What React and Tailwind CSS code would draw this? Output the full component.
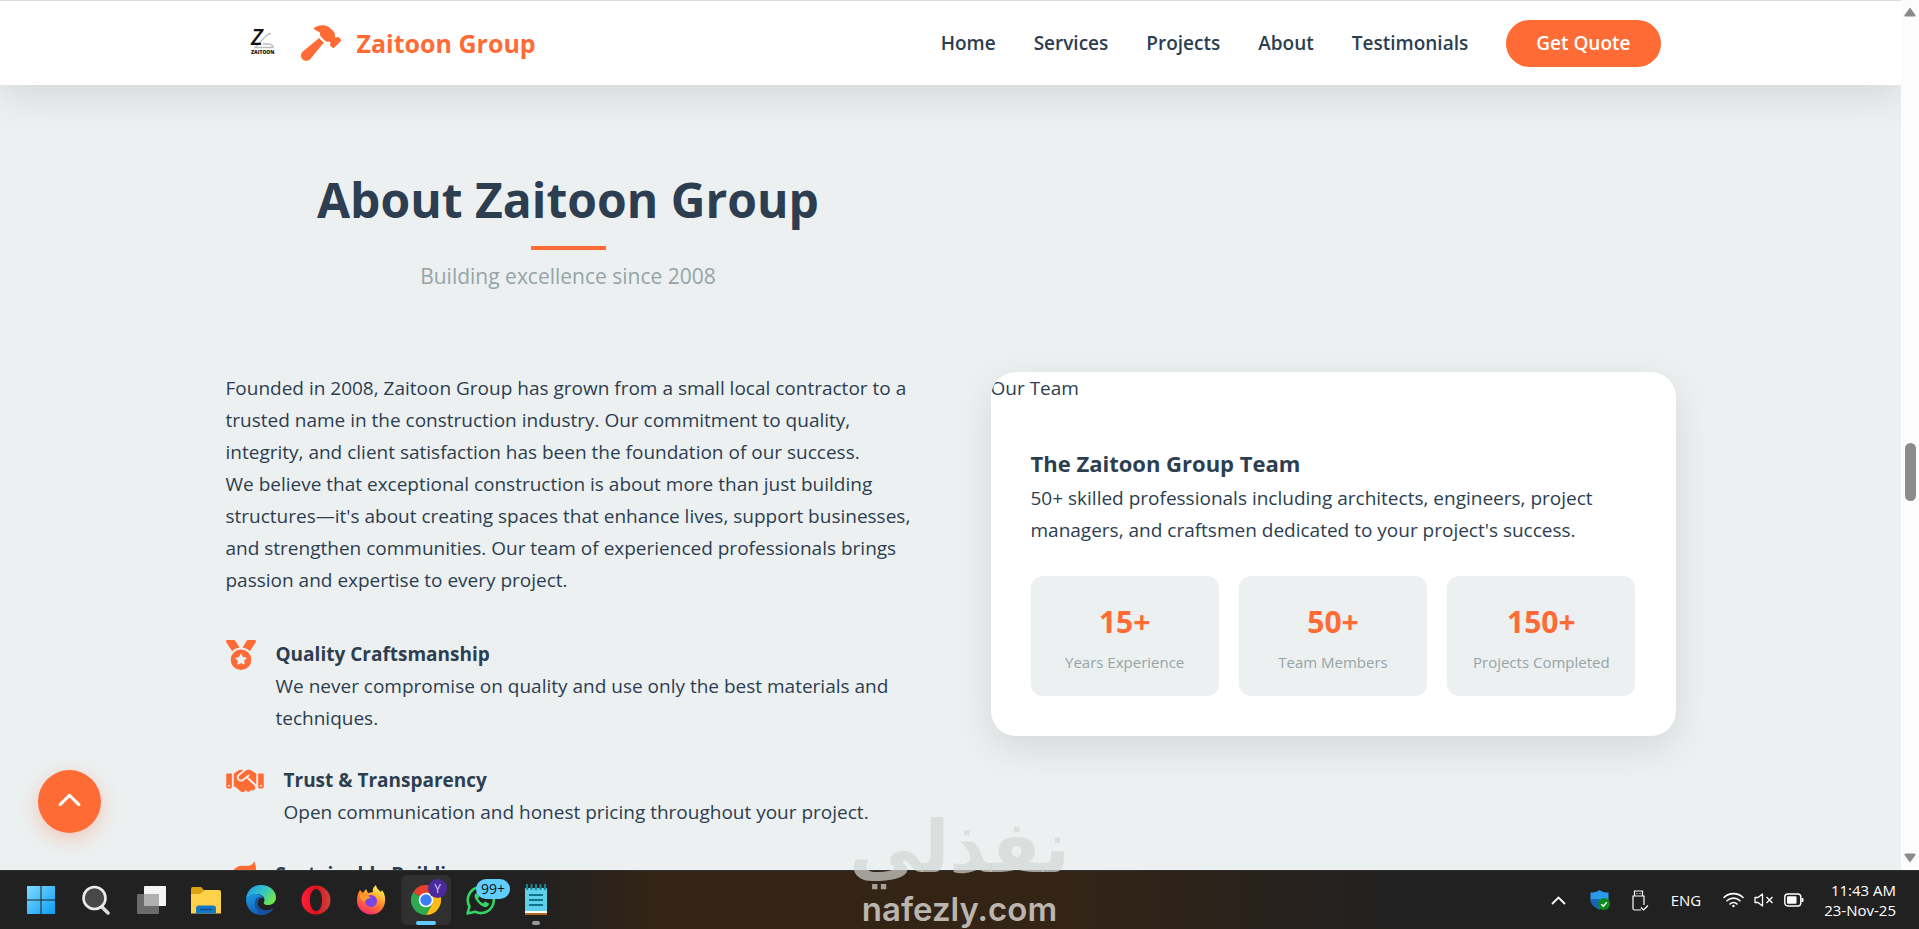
import React from "react";
import {
  FaChevronUp,
  FaHammer,
  FaHandshake,
  FaLeaf,
  FaMedal,
} from "react-icons/fa6";

const navLinks = ["Home", "Services", "Projects", "About", "Testimonials"];

const features = [
  {
    icon: FaMedal,
    iconSize: "h-[30px] w-[30px]",
    title: "Quality Craftsmanship",
    text: "We never compromise on quality and use only the best materials and techniques.",
  },
  {
    icon: FaHandshake,
    iconSize: "h-[30px] w-[38px]",
    title: "Trust & Transparency",
    text: "Open communication and honest pricing throughout your project.",
  },
  {
    icon: FaLeaf,
    iconSize: "h-[30px] w-[30px]",
    title: "Sustainable Building",
  },
];

const stats = [
  { value: "15+", label: "Years Experience" },
  { value: "50+", label: "Team Members" },
  { value: "150+", label: "Projects Completed" },
];

const ZaitoonLogo = () => (
  <svg width="62" height="62" viewBox="0 0 62 62" aria-label="Zaitoon logo">
    <path d="M32 21.500 C29 21.500 28 23 26 25 L16 35.500 H34 V34 L30.500 32 H24" fill="none" stroke="#bdbdbd" strokeWidth="1.300" />
    <text x="12" y="33" fontFamily="Open Sans, sans-serif" fontSize="22" fontStyle="italic" fontWeight="600" fill="#111">
      Z
    </text>
    <text x="12" y="42" fontFamily="Open Sans, sans-serif" fontSize="5" fontWeight="800" fill="#111">
      ZAITOON
    </text>
  </svg>
);

const Header = () => (
  <header className="relative z-10 border-t border-[#dcdcdc] bg-white shadow-[0_12px_38px_rgba(0,0,0,0.1)]">
    <div className="mx-auto flex h-[84px] max-w-[1500px] items-center justify-between pr-10 pl-[38px]">
      <a href="#home" className="flex items-center text-[25px] font-bold text-[#ff6b35]">
        <ZaitoonLogo />
        <FaHammer className="mr-4 size-[40px]" />
        Zaitoon Group
      </a>
      <nav className="flex items-center gap-[38px] text-[19px] font-semibold">
        {navLinks.map((link) => (
          <a key={link} href={`#${link.toLowerCase()}`}>
            {link}
          </a>
        ))}
        <button className="h-[47px] rounded-full bg-[#ff6b35] px-[30px] text-white">Get Quote</button>
      </nav>
    </div>
  </header>
);

const TeamCard = () => (
  <div className="self-start overflow-hidden rounded-[25px] bg-white shadow-[0_12px_38px_rgba(0,0,0,0.1)]">
    <p>Our Team</p>
    <div className="p-10">
      <h3 className="text-[22px] leading-[38px] font-bold">The Zaitoon Group Team</h3>
      <p>
        50+ skilled professionals including architects, engineers, project managers, and craftsmen
        dedicated to your project's success.
      </p>
      <div className="mt-[30px] grid grid-cols-3 gap-5">
        {stats.map((stat) => (
          <div key={stat.label} className="rounded-xl bg-[#ecf0f1] py-5 text-center">
            <div className="text-[30px] leading-[52px] font-bold text-[#ff6b35]">{stat.value}</div>
            <div className="text-[15px] leading-7 text-[#95a5a6]">{stat.label}</div>
          </div>
        ))}
      </div>
    </div>
  </div>
);

const AboutSection = () => (
  <section id="about" className="mx-auto grid max-w-[1500px] grid-cols-2 gap-x-20 px-[25px] pt-[75px]">
    <div className="flex flex-col items-center pb-[78px]">
      <h2 className="text-[48px] leading-[80px] font-bold">About Zaitoon Group</h2>
      <div className="mt-[6px] h-1 w-[75px] bg-[#ff6b35]" />
      <p className="mt-2 text-[21px] leading-9 text-[#95a5a6]">Building excellence since 2008</p>
    </div>
    <div />
    <div>
      <p>
        Founded in 2008, Zaitoon Group has grown from a small local contractor to a trusted name in
        the construction industry. Our commitment to quality, integrity, and client satisfaction has
        been the foundation of our success.
      </p>
      <p>
        We believe that exceptional construction is about more than just building structures—it's
        about creating spaces that enhance lives, support businesses, and strengthen communities. Our
        team of experienced professionals brings passion and expertise to every project.
      </p>
      <ul className="mt-[42px] space-y-[30px]">
        {features.map(({ icon: Icon, iconSize, title, text }) => (
          <li key={title} className="flex items-start gap-5">
            <span className="mt-[2px] shrink-0 text-[#ff6b35]">
              <Icon className={iconSize} />
            </span>
            <div>
              <h4 className="font-bold">{title}</h4>
              {text && <p>{text}</p>}
            </div>
          </li>
        ))}
      </ul>
    </div>
    <TeamCard />
  </section>
);

const Scrollbar = () => (
  <div className="flex w-[18px] shrink-0 flex-col items-center bg-[#fcfcfc] py-[7px]">
    <svg width="12" height="10" viewBox="0 0 12 10">
      <path d="M6 0.5 L11.5 8 Q12 9.5 10.500 9.500 H1.500 Q0 9.500 0.500 8 Z" fill="#8b8b8b" />
    </svg>
    <div className="mt-[426px] h-[58px] w-[11px] rounded-full bg-[#8b8b8b]" />
    <svg className="mt-auto" width="12" height="10" viewBox="0 0 12 10">
      <path d="M6 9.5 L11.5 2 Q12 0.5 10.500 0.500 H1.500 Q0 0.500 0.500 2 Z" fill="#8b8b8b" />
    </svg>
  </div>
);

const WindowsIcon = () => (
  <svg width="30" height="30" viewBox="0 0 30 30">
    <defs>
      <linearGradient id="win" x1="0" y1="0" x2="1" y2="1">
        <stop offset="0" stopColor="#7fdcff" />
        <stop offset="1" stopColor="#0a9cf5" />
      </linearGradient>
    </defs>
    <path d="M1 1h13.500v13.500H1z M15.500 1H29v13.500H15.500z M1 15.500h13.500V29H1z M15.500 15.500H29V29H15.500z" fill="url(#win)" />
  </svg>
);

const SearchIcon = () => (
  <svg width="30" height="30" viewBox="0 0 30 30">
    <path d="M20 21l7 7" stroke="#dcdcdc" strokeWidth="3.500" strokeLinecap="round" />
    <circle cx="13.500" cy="13" r="11" fill="#484848" stroke="#ececec" strokeWidth="2.600" />
  </svg>
);

const TaskViewIcon = () => (
  <svg width="30" height="30" viewBox="0 0 30 30">
    <rect x="8" y="1" width="22" height="20" rx="1" fill="#f4f4f4" />
    <rect x="1" y="9" width="22" height="20" rx="1" fill="#6b6b6b" />
    <path d="M8 9h15v12H8z" fill="#b0b0b0" />
  </svg>
);

const ExplorerIcon = () => (
  <svg width="30" height="30" viewBox="0 0 30 30">
    <path d="M0 4q0-2 2-2h8l4 4v6H0z" fill="#dba313" />
    <path d="M0 9h9l5-4h14q2 0 2 2v21.500H0z" fill="#ffd04a" />
    <path d="M5 28.500v-5q0-3 3-3h14q3 0 3 3v5z" fill="#1478c4" />
    <path d="M9 24.500h12" stroke="#0b4f8c" strokeWidth="1.500" />
  </svg>
);

const EdgeIcon = () => (
  <svg width="30" height="30" viewBox="0 0 30 30">
    <defs>
      <linearGradient id="edgeTop" x1="0" y1="0" x2="1" y2="0.500">
        <stop offset="0.100" stopColor="#1e9de8" />
        <stop offset="0.600" stopColor="#36c5c5" />
        <stop offset="1" stopColor="#6be353" />
      </linearGradient>
      <linearGradient id="edgeBody" x1="0" y1="0" x2="0.600" y2="1">
        <stop offset="0" stopColor="#1b9be8" />
        <stop offset="1" stopColor="#1257ae" />
      </linearGradient>
    </defs>
    <path d="M0 14C1 5 7 0 15 0c9 0 15 6 15 12.500 0 4.500-3.500 7.500-7.500 7.500-4 0-5.500-1.500-4.500-3 2-4-2-8-7-8C5 9 1 12 0 14z" fill="url(#edgeTop)" />
    <path d="M0 14C2 10 6 8.500 10.500 9c4 .3 6.500 2.500 7 4.500-3-1.500-6 1-6 4.500 0 4.500 4 7.500 9 7.500 3 0 5-1 6.800-2C25 27.500 20 30 15 30 6 30 0 23 0 14z" fill="url(#edgeBody)" />
    <path d="M17 12c-6-1.500-9 3-8 8 1 6 6 10 9 9.700 4.500-.7 8-3.500 9.300-6.200C20 28 10 24 11.500 17c.5-2.500 3-4.500 5.500-5z" fill="#17509b" />
  </svg>
);

const OperaIcon = () => (
  <svg width="30" height="30" viewBox="0 0 30 30">
    <defs>
      <linearGradient id="opera" x1="0" y1="0" x2="1" y2="0">
        <stop offset="0" stopColor="#ff2035" />
        <stop offset="0.500" stopColor="#e0101f" />
        <stop offset="1" stopColor="#c8453f" />
      </linearGradient>
    </defs>
    <path fillRule="evenodd" d="M15 0.500a14.500 14.500 0 1 0 0 29 14.500 14.500 0 1 0 0-29z M15 4c4 0 6 5 6 11s-2 11-6 11-6-5-6-11 2-11 6-11z" fill="url(#opera)" />
  </svg>
);

const FirefoxIcon = () => (
  <svg width="30" height="30" viewBox="0 0 30 30">
    <defs>
      <linearGradient id="fox" x1="0.800" y1="0" x2="0.300" y2="1">
        <stop offset="0.100" stopColor="#fff04f" />
        <stop offset="0.500" stopColor="#ff8a26" />
        <stop offset="1" stopColor="#f5276c" />
      </linearGradient>
    </defs>
    <path d="M4 5l3 3 3-4 2 4 5-1c-1-3 1-5 3-7 0 3 3 5 5 7l1-2c3 4 3.500 8 3 12-1 8-7 12.500-14 12.500S1 24 1 16c0-5 1-8 3-11z" fill="url(#fox)" />
    <circle cx="15" cy="16" r="6" fill="#7a45e0" />
    <path d="M4 10c5 0 8 0 11 3-3 0-5 1-6 4-3-1-5-3-5-7z" fill="#ff9a2c" />
  </svg>
);

const ChromeIcon = () => (
  <svg width="30" height="30" viewBox="0 0 30 30">
    <path d="M15 15 2 7.500A15 15 0 0 1 28 7.500H15z" fill="#e8402f" />
    <path d="M15 15l6.500 3.700L15 30A15 15 0 0 1 2 7.500z" fill="#2da94f" />
    <path d="M15 7.500h13A15 15 0 0 1 15 30l6.500-11.300z" fill="#fdbd16" />
    <circle cx="15" cy="15" r="7.300" fill="#fff" />
    <circle cx="15" cy="15" r="5.700" fill="#3a7ff2" />
  </svg>
);

const WhatsappIcon = () => (
  <svg width="30" height="30" viewBox="0 0 30 30">
    <path d="M1.500 28.500l2-7A13 13 0 1 1 9 26.700z" fill="#212121" stroke="#35d366" strokeWidth="2.600" strokeLinejoin="round" />
    <path d="M11 8c-3 1-3 4-1 7s5 6 8.500 7c2.500.6 4.500-1 4.500-3.500L19 16.500l-2 2c-2-1-4-3-5-5l1.500-2z" fill="#35d366" />
  </svg>
);

const NotepadIcon = () => (
  <svg width="24" height="32" viewBox="0 0 24 32">
    <path d="M1 4h22v24H1z" fill="#5fd0ea" />
    <path d="M1 27h22v2H1z" fill="#fff" />
    <path d="M1 29h22v2H1z" fill="#b8661e" />
    <path d="M3 1v4M7.500 1v4M12 1v4M16.500 1v4M21 1v4" stroke="#1d7f95" strokeWidth="2.200" strokeLinecap="round" />
    <path d="M5 11h14M5 16h14M5 21h14" stroke="#14748b" strokeWidth="1.800" />
  </svg>
);

const ShieldIcon = () => (
  <svg width="20" height="20" viewBox="0 0 20 20">
    <path d="M9.500 0C12 2 15 2.500 18.500 2.500V9c0 5-4 8-9 10.500C4.500 17 .5 14 .5 9V2.500C4 2.500 7 2 9.500 0z" fill="#2a9bea" />
    <path d="M.5 9h9v10.500C4.500 17 .5 14 .5 9z" fill="#1565b8" />
    <circle cx="14" cy="14" r="6" fill="#0f8a1f" />
    <path d="M11.300 14.200l2 2 3.500-4" fill="none" stroke="#fff" strokeWidth="1.300" />
  </svg>
);

const UsbIcon = () => (
  <svg width="17" height="21" viewBox="0 0 17 21" fill="none" stroke="#fff" strokeWidth="1.200">
    <path d="M9 20H2.500Q1 20 1 18.500V6h11v9" />
    <path d="M2.500 6V1h8v5" />
    <path d="M4.500 3.500h1M7.500 3.500h1M9 17.500l2.500 2.500 4.500-4.500" />
  </svg>
);

const WifiIcon = () => (
  <svg width="21" height="16" viewBox="0 0 21 16" fill="none" stroke="#fff" strokeWidth="1.600" strokeLinecap="round">
    <path d="M1 5.500a13.500 13.500 0 0 1 19 0M4 8.800a9.200 9.200 0 0 1 13 0M7 12a5 5 0 0 1 7 0" />
    <circle cx="10.500" cy="14" r="1.200" fill="#fff" stroke="none" />
  </svg>
);

const MuteIcon = () => (
  <svg width="20" height="14" viewBox="0 0 20 14" fill="none" stroke="#fff" strokeWidth="1.300" strokeLinejoin="round">
    <path d="M1 4.500h3L8.500 1v12L4 9.500H1z" />
    <path d="M12.500 4l6 6M18.500 4l-6 6" />
  </svg>
);

const BatteryIcon = () => (
  <svg width="20" height="14" viewBox="0 0 20 14">
    <rect x="0.800" y="1" width="16" height="12" rx="3" fill="none" stroke="#fff" strokeWidth="1.400" />
    <rect x="3" y="3.200" width="9.500" height="7.600" rx="1" fill="#fff" />
    <path d="M17.500 5h1q1 0 1 1v2q0 1-1 1h-1z" fill="#fff" />
  </svg>
);

const taskbarApps = [
  { name: "Start", icon: WindowsIcon },
  { name: "Search", icon: SearchIcon },
  { name: "Task View", icon: TaskViewIcon },
  { name: "File Explorer", icon: ExplorerIcon },
  { name: "Edge", icon: EdgeIcon },
  { name: "Opera", icon: OperaIcon },
  { name: "Firefox", icon: FirefoxIcon },
  { name: "Chrome", icon: ChromeIcon, active: true, profile: "Y" },
  { name: "WhatsApp", icon: WhatsappIcon, count: "99+" },
  { name: "Notepad", icon: NotepadIcon, running: true },
];

const Taskbar = () => (
  <footer className="flex h-[59px] shrink-0 items-center justify-between border-t border-[#333333] bg-[linear-gradient(to_right,#212121_28%,#332416_34%,#332416_56%,#212121_73%)] pr-[23px] pl-4 text-white">
    <div className="flex items-center gap-[5px]">
      {taskbarApps.map(({ name, icon: Icon, active, running, profile, count }) => (
        <button
          key={name}
          aria-label={name}
          className={
            active
              ? "relative flex h-[50px] w-[50px] items-center justify-center rounded-md bg-[#303030]"
              : "relative flex h-[50px] w-[50px] items-center justify-center"
          }
        >
          <Icon />
          {profile && (
            <span className="absolute top-1 right-1 flex size-[19px] items-center justify-center rounded-full bg-[#4b2a9b] text-[12px] leading-4 text-[#d8ccff]">
              {profile}
            </span>
          )}
          {count && (
            <span className="absolute top-1 left-5 flex h-5 w-[34px] items-center justify-center rounded-full bg-[#60cdff] text-[14px] leading-5 text-[#111111]">
              {count}
            </span>
          )}
          {active && <span className="absolute bottom-0 h-1 w-5 rounded-full bg-[#60cdff]" />}
          {running && <span className="absolute bottom-0 h-1 w-2 rounded-full bg-[#9a9a9a]" />}
        </button>
      ))}
    </div>
    <div className="flex items-center text-[15px]">
      <svg width="15" height="9" viewBox="0 0 15 9" fill="none" stroke="#fff" strokeWidth="1.800">
        <path d="M1 8l6.500-6.500L14 8" />
      </svg>
      <span className="ml-6 flex items-center gap-[22px]">
        <ShieldIcon />
        <UsbIcon />
        <span>ENG</span>
      </span>
      <span className="ml-[22px] flex items-center gap-[10px]">
        <WifiIcon />
        <MuteIcon />
        <BatteryIcon />
      </span>
      <time className="ml-5 text-right leading-5">
        11:43 AM
        <br />
        23-Nov-25
      </time>
    </div>
  </footer>
);

const Watermark = () => (
  <div className="pointer-events-none absolute bottom-0 left-1/2 z-20 flex -translate-x-1/2 flex-col items-center">
    <span lang="ar" dir="rtl" className="font-['DejaVu_Sans',sans-serif] text-[72px] leading-[84px] font-bold text-[#d3d5d3]/70">
      نفذلي
    </span>
    <span className="font-['Inter',sans-serif] text-[33px] leading-10 font-semibold text-[#d5d0cc]/85">
      nafezly.com
    </span>
  </div>
);

const App = () => {
  return (
    <div className="relative flex h-screen flex-col overflow-hidden font-['Open_Sans','Noto_Sans',sans-serif] text-[19px] leading-8 text-[#2c3e50]">
      <div className="flex min-h-0 flex-1">
        <main className="relative flex-1 overflow-hidden bg-[#ecf0f1]">
          <Header />
          <AboutSection />
          <button
            aria-label="Back to top"
            className="absolute bottom-[37px] left-[38px] flex size-[63px] items-center justify-center rounded-full bg-[#ff6b35] text-white shadow-[0_6px_19px_rgba(255,107,53,0.3)]"
          >
            <FaChevronUp className="size-[25px]" />
          </button>
        </main>
        <Scrollbar />
      </div>
      <Taskbar />
      <Watermark />
    </div>
  );
};

export default App;
